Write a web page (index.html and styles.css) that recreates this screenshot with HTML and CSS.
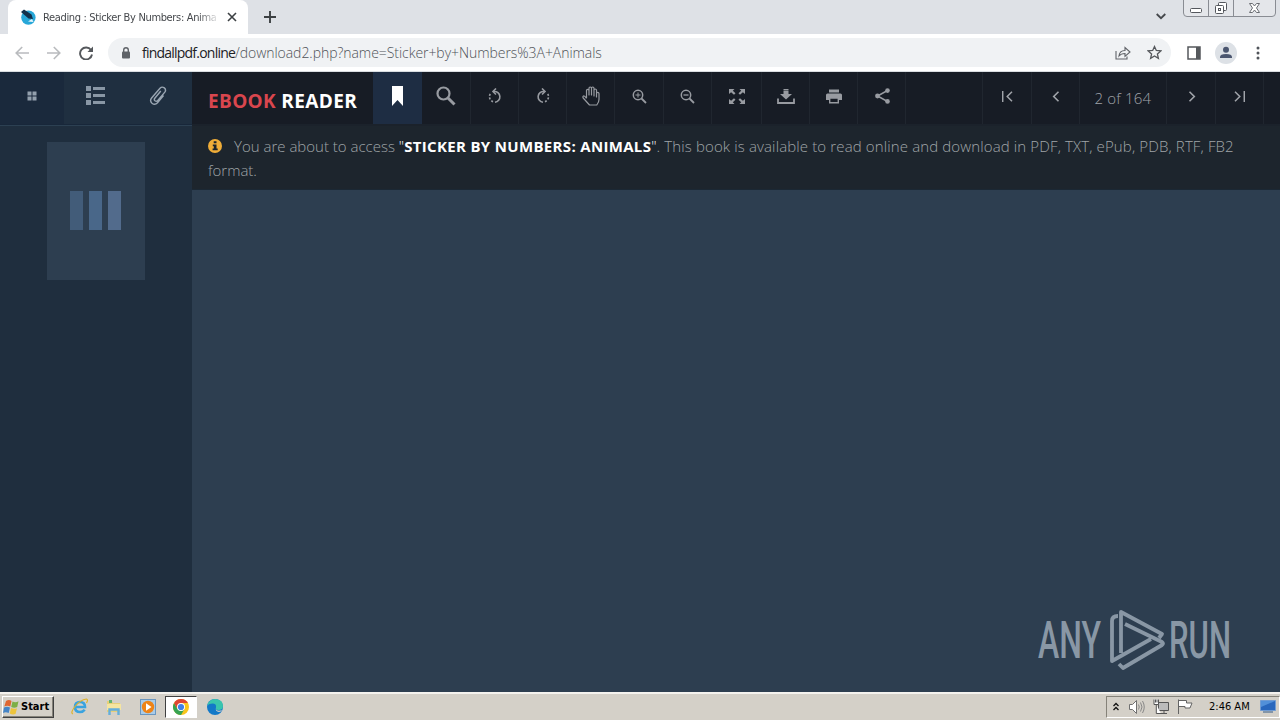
FILE: index.html
```html
<!DOCTYPE html>
<html lang="en">
<head>
<meta charset="utf-8">
<title>Reading : Sticker By Numbers: Animals</title>
<link rel="stylesheet" href="styles.css">
</head>
<body>
<header class="tabstrip">
  <div class="tab">
    <svg class="favicon" width="16" height="16" viewBox="0 0 16 16"><circle cx="8.400" cy="8.600" r="7.200" fill="#27a7d8"/><path d="m1 3 3-2.500 7.500 5L13 10l-4.500-.5z" fill="#12304b"/><path d="m8 12.500 4-2.500 1.500 3z" fill="#e9f6fb"/></svg>
    <span class="tab-title">Reading : Sticker By Numbers: Anima</span>
    <svg class="tab-close" width="10" height="10" viewBox="0 0 10 10"><path d="m1 1 8 8M9 1 1 9" stroke="#3c4043" stroke-width="1.600"/></svg>
  </div>
  <svg class="newtab" width="12" height="12" viewBox="0 0 12 12"><path d="M6 0v12M0 6h12" stroke="#3c4043" stroke-width="1.900"/></svg>
  <svg class="tabsearch" width="10" height="7" viewBox="0 0 10 7"><path d="m.7 1 4.300 4.200L9.300 1" fill="none" stroke="#45484c" stroke-width="1.800"/></svg>
  <svg class="winctl" width="94" height="18" viewBox="0 0 94 18"><path d="M.5 0v13q0 3.500 3.500 3.500h85q3.500 0 3.500-3.500V0M25.500 0v16M50.500 0v16" fill="#e4e6ea" stroke="#898c93"/><rect x="7.500" y="8.500" width="11" height="4" rx="1" fill="#fff" stroke="#54575d"/><rect x="35.500" y="2.500" width="8" height="8" rx="1" fill="#fff" stroke="#54575d"/><rect x="32.500" y="5.500" width="8" height="8" rx="1" fill="#fff" stroke="#54575d"/><rect x="35.500" y="8.500" width="2" height="2" fill="#fff" stroke="#54575d"/><path d="M66.500 3.500h3l2 2.500 2-2.500h3l-3 4.500 3 4.500h-3l-2-2.500-2 2.500h-3l3-4.500z" fill="#fff" stroke="#6a6d73"/></svg>
</header>
<nav class="addressbar">
  <svg class="nav-back" width="14" height="14" viewBox="0 0 14 14"><path d="M14 7H1.500M7.200 1 1.200 7l6 6" fill="none" stroke="#b9bbbe" stroke-width="1.600"/></svg>
  <svg class="nav-fwd" width="14" height="14" viewBox="0 0 14 14"><path d="M0 7h12.500M6.800 1l6 6-6 6" fill="none" stroke="#b9bbbe" stroke-width="1.600"/></svg>
  <svg class="nav-reload" width="14" height="14" viewBox="0 0 14 14"><path d="M12 4A6 6 0 1 0 13 8.500" fill="none" stroke="#55585c" stroke-width="1.900"/><path d="M14 .5V6H8.500z" fill="#55585c"/></svg>
  <div class="omnibox">
    <svg class="lock" width="10" height="12" viewBox="0 0 10 12"><rect x="1" y="4.500" width="8" height="7" rx="1" fill="#5f6368"/><path d="M2.700 5V3a2.300 2.200 0 0 1 4.600 0v2" fill="none" stroke="#5f6368" stroke-width="1.400"/></svg>
    <span class="url"><span class="url-host">findallpdf.online</span><span class="url-path">/download2.php?name=Sticker+by+Numbers%3A+Animals</span></span>
    <svg class="share-page" width="16" height="14" viewBox="0 0 16 14"><path d="M1 5v8h11v-2.500M4 10q.5-5.500 6-5.500V1.500L15 6l-5 4.300V7.500Q6 7.500 4 10z" fill="none" stroke="#606368" stroke-width="1.100"/></svg>
    <svg class="star" width="15" height="15" viewBox="0 0 15 15"><path d="m7.500 1.500 1.800 4 4.500.4-3.400 3 1 4.400-3.900-2.300-3.900 2.300 1-4.400-3.400-3 4.500-.4z" fill="none" stroke="#55585c" stroke-width="1.300"/></svg>
  </div>
  <svg class="panel" width="14" height="14" viewBox="0 0 14 14"><path d="M1 1h12v12H1z" fill="none" stroke="#55585c" stroke-width="1.500"/><path d="M9 1h4v12H9z" fill="#55585c"/></svg>
  <svg class="avatar" width="22" height="22" viewBox="0 0 22 22"><circle cx="11" cy="11" r="11" fill="#dde1e6"/><circle cx="11" cy="7.800" r="3" fill="#4b566f"/><path d="M5 16v-1q0-3 6-3t6 3v1z" fill="#4b566f"/></svg>
  <svg class="more" width="4" height="14" viewBox="0 0 4 14" fill="#50545a"><circle cx="2" cy="2" r="1.500"/><circle cx="2" cy="7" r="1.500"/><circle cx="2" cy="12" r="1.500"/></svg>
</nav>
<main class="reader">
  <aside class="sidebar">
    <div class="side-tabs">
      <div class="side-tab side-tab-on"><svg width="10" height="10" viewBox="0 0 10 10" fill="#93a0ad"><path d="M.5.500h4v4h-4zM5.500.500h4v4h-4zM.5 5.500h4v4h-4zM5.500 5.500h4v4h-4z"/></svg></div>
      <div class="side-tab"><svg width="20" height="19" viewBox="0 0 20 19" fill="#8997a5"><path d="M0 0h5v5H0zM0 7h5v5H0zM0 14h5v5H0zM7 1h12v3H7zM7 8h12v3H7zM7 15h12v3H7z"/></svg></div>
      <div class="side-tab side-tab-clip"><svg width="18" height="20" viewBox="0 0 18 20"><path d="m14.500 9.500-6 7.200Q6 19.500 3 17.200.4 15 2.600 12L11 2.200q2-2 4.300-.3 2.200 1.900.5 4.200l-7 8.400q-1.300 1.500-2.800.3-1.300-1.200-.2-2.600l6-7.200" fill="none" stroke="#9aa6b2" stroke-width="1.400"/></svg></div>
    </div>
    <div class="thumb"><i class="bar bar-a"></i><i class="bar bar-b"></i><i class="bar bar-c"></i></div>
  </aside>
  <section class="viewer">
    <div class="toolbar">
      <h1 class="brand"><span class="brand-red">EBOOK</span> READER</h1>
      <div class="tool tool-on"><svg width="11" height="20" viewBox="0 0 11 20"><path d="M0 0h11v20l-5.500-6L0 20z" fill="#fff"/></svg></div>
      <div class="tool tool-search"><svg width="20" height="20" viewBox="0 0 20 20" fill="none" stroke="#989ba1"><circle cx="7.500" cy="7.500" r="6" stroke-width="2.200"/><path d="m12 12 6.500 6.500" stroke-width="3"/></svg></div>
      <div class="tool"><svg width="14" height="16" viewBox="0 0 14 16" fill="none" stroke="#989ba1" stroke-width="1.600"><path d="M6 3.500A5.300 5.300 0 1 1 7 14.200"/><path d="M5 13.700A5.400 5.400 0 0 1 2.500 5.500" stroke-dasharray="2 1.600"/><path d="M8 .5 5 3.500l3 3"/></svg></div>
      <div class="tool"><svg width="14" height="16" viewBox="0 0 14 16" fill="none" stroke="#989ba1" stroke-width="1.600"><path d="M8 3.500A5.300 5.300 0 1 0 7 14.200"/><path d="M9 13.700a5.400 5.400 0 0 0 2.500-8.200" stroke-dasharray="2 1.600"/><path d="m6 .5 3 3-3 3"/></svg></div>
      <div class="tool"><svg width="18" height="20" viewBox="0 0 18 20"><path d="M4.500 12V4.500q0-1.200 1.200-1.200T7 4.500V9 2.200Q7 1 8.200 1t1.300 1.200V9 2.200Q9.500 1 10.700 1T12 2.200V10 4q0-1 1.200-1t1.300 1v7-3.500q0-1.200 1.200-1.200T17 7.500v6q0 2.500-2.200 5.500H7.500L1.200 12q-.7-1.500.3-2t3 2.500" fill="none" stroke="#989ba1" stroke-width="1.200" stroke-linejoin="round"/></svg></div>
      <div class="tool"><svg width="15" height="15" viewBox="0 0 15 15" fill="none" stroke="#989ba1"><circle cx="6" cy="6" r="4.700" stroke-width="1.500"/><path d="m9.500 9.500 4.500 4.500" stroke-width="1.800"/><path d="M3.500 6h5M6 3.500v5"/></svg></div>
      <div class="tool"><svg width="15" height="15" viewBox="0 0 15 15" fill="none" stroke="#989ba1"><circle cx="6" cy="6" r="4.700" stroke-width="1.500"/><path d="m9.500 9.500 4.500 4.500" stroke-width="1.800"/><path d="M3.500 6h5" stroke-width="1.300"/></svg></div>
      <div class="tool tool-wide"><svg width="16" height="15" viewBox="0 0 16 15"><path d="M0 0h5.500L3.800 1.700l2.700 2.600-1.500 1.500-2.900-2.600L0 5zM16 0h-5.500l1.700 1.700-2.700 2.600L11 5.800l2.900-2.600L16 5zM0 15h5.500l-1.700-1.700 2.700-2.600L5 9.200l-2.900 2.600L0 10zM16 15h-5.500l1.700-1.700-2.700-2.600L11 9.200l2.900 2.600L16 10z" fill="#989ba1"/></svg></div>
      <div class="tool"><svg width="18" height="15" viewBox="0 0 18 15"><path d="M6.500 1.500h5V5H15l-6 5.500L3 5h3.500zM6.500 0h5v1h-5z" fill="#989ba1"/><path d="M1 9.500V14h16V9.500" fill="none" stroke="#989ba1" stroke-width="1.800"/></svg></div>
      <div class="tool"><svg width="16" height="15" viewBox="0 0 16 15"><path d="M3 .5h10v3H3zM1.500 4.500h13q1.500 0 1.500 1.500v5h-3V9H3v2H0V6q0-1.500 1.500-1.500z" fill="#989ba1"/><path d="M3.700 9h8.600v4.800H3.700z" fill="none" stroke="#989ba1" stroke-width="1.400"/></svg></div>
      <div class="tool"><svg width="15" height="16" viewBox="0 0 15 16" fill="#989ba1"><path d="M12.500 2.500 2.500 8l10 5.500" fill="none" stroke="#989ba1" stroke-width="1.500"/><circle cx="12.500" cy="2.600" r="2.300"/><circle cx="2.500" cy="8" r="2.400"/><circle cx="12.500" cy="13.400" r="2.300"/></svg></div>
      <div class="spacer"></div>
      <div class="tool tool-nav"><svg width="11" height="11" viewBox="0 0 11 11"><path d="M.7 0v11M10 .7 5.200 5.500l4.800 4.800" fill="none" stroke="#a1a4aa" stroke-width="1.500"/></svg></div>
      <div class="tool"><svg width="8" height="11" viewBox="0 0 8 11"><path d="M6.500.7 1.700 5.500l4.800 4.800" fill="none" stroke="#a1a4aa" stroke-width="1.600"/></svg></div>
      <div class="page-count">2 of 164</div>
      <div class="tool tool-nav"><svg width="8" height="11" viewBox="0 0 8 11"><path d="m1.500.7 4.800 4.800-4.800 4.800" fill="none" stroke="#a1a4aa" stroke-width="1.600"/></svg></div>
      <div class="tool"><svg width="11" height="11" viewBox="0 0 11 11"><path d="m1 .7 4.800 4.800L1 10.300M10.300 0v11" fill="none" stroke="#a1a4aa" stroke-width="1.500"/></svg></div>
      <div class="tail"></div>
    </div>
    <div class="notice">
      <p class="notice-line"><svg class="info" width="14" height="14" viewBox="0 0 14 14"><circle cx="7" cy="7" r="7" fill="#f0ad38"/><path d="M5.700 2.300h2.800v2H5.700zM4.800 5.500h3.700v4h1.200v1.800H4.600V9.500h1.200V7.200h-1z" fill="#1d242c"/></svg><span>You are about to access </span><span class="quote">"</span><b class="book">STICKER BY NUMBERS: ANIMALS</b><span class="quote">"</span><span class="after">. This book is available to read online and download in PDF, TXT, ePub, PDB, RTF, FB2</span></p>
      <p class="notice-line">format.</p>
    </div>
    <div class="canvas">
      <div class="watermark">
        <svg class="wm-logo" width="194" height="62" viewBox="0 0 194 62" fill="none" stroke="#8997a5">
          <text class="wm-text" x="-1" y="49" textLength="63" lengthAdjust="spacingAndGlyphs">ANY</text>
          <path d="M79 7q-6 0-6 5v40l39-22M82 44V3l41 22-3 4M86 15l37 18q2 1.500 0 3L84 59l-4-4" stroke-width="3.800" stroke-linejoin="round"/>
          <text class="wm-text" x="130" y="49" textLength="62" lengthAdjust="spacingAndGlyphs">RUN</text>
        </svg>
      </div>
    </div>
  </section>
</main>
<footer class="taskbar">
  <div class="start"><svg width="17" height="16" viewBox="0 0 17 16"><path d="M3 2q3-2 5.500 0L7.300 7.500q-3-1.500-6 0z" fill="#df6631"/><path d="M9.500 2.500q3 1.500 6-.2L14.200 8q-3 1.300-6 0z" fill="#7daf48"/><path d="M1 8.500q3-1.500 6 0L5.700 14q-3-1.700-5.700 0z" fill="#4584c6"/><path d="M8 9q3 1.300 6 .2L12.500 15q-3 1-5.700-.5z" fill="#edc43c"/></svg><span class="start-text">Start</span></div>
  <div class="task"><svg width="18" height="17" viewBox="0 0 18 17"><path d="M4 9h10q0-5-5-5T4 9q0 5 5 5 3 0 4.700-2.300" fill="none" stroke="#3aa3df" stroke-width="2.600"/><path d="M2 16Q-1 15 4 8.500T15.500 1q2 .5 0 4" fill="none" stroke="#deb22b" stroke-width="1.200"/></svg></div>
  <div class="task"><svg width="16" height="16" viewBox="0 0 16 16"><path d="M1 2h5l1 2h7v9H1z" fill="#e7cf79"/><path d="M3 1h3v3H3z" fill="#63b36e"/><path d="M1 5h14v6H1z" fill="#f5e5a0"/><path d="M3.500 16v-5.500h9V16" fill="none" stroke="#64aedb" stroke-width="2.400"/></svg></div>
  <div class="task"><svg width="16" height="16" viewBox="0 0 16 16"><rect x=".5" y=".5" width="15" height="15" fill="#a9cce9" stroke="#6a96bf"/><circle cx="8" cy="8" r="6.200" fill="#ee8418"/><path d="m6 4.300 5.500 3.700L6 11.700z" fill="#fff"/></svg></div>
  <div class="task task-on"><svg width="16" height="16" viewBox="0 0 16 16"><circle cx="8" cy="8" r="8" fill="#f9c51c"/><path d="M1.070 4A8 8 0 0 1 14.930 4H8z" fill="#df4634"/><path d="M1.070 4A8 8 0 0 0 8 16l3.500-6L8 8 4.500 10z" fill="#36a352"/><path d="M1.070 4 4.500 10 8 4z" fill="#df4634"/><circle cx="8" cy="8" r="4" fill="#fff"/><circle cx="8" cy="8" r="3.100" fill="#4080e8"/></svg></div>
  <div class="task"><svg width="16" height="16" viewBox="0 0 16 16"><circle cx="8" cy="8" r="8" fill="#1379c8"/><path d="M.3 6.500Q2 0 8.200 0 16 .5 16 7q0 4-4.500 4-3.500 0-2.500-2.500.7-4-3.500-4Q2 4.500.3 6.500z" fill="#39c5ad"/><path d="M9 8.500q-1 3 3 3.200 2 0 3.200-1-1.200 2.300-3.200 2.300-4-.5-3-4.500z" fill="#d4d0c8"/></svg></div>
  <div class="tray">
    <svg class="tray-up" width="6" height="9" viewBox="0 0 6 9"><path d="m.5 4 2.500-2.500L5.500 4M.5 8 3 5.500 5.500 8" fill="none" stroke="#111" stroke-width="1.300"/></svg>
    <svg class="tray-sound" width="16" height="14" viewBox="0 0 16 14"><path d="M.5 4.500h3l4-4v13l-4-4h-3z" fill="#fff" stroke="#707070"/><path d="M9.500 4.500q1.500 2.500 0 5M11.500 2.500q3 4.500 0 9M13.500 1q3.500 6 0 12" fill="none" stroke="#888"/></svg>
    <svg class="tray-net" width="16" height="16" viewBox="0 0 16 16"><path d="M5.500 3.500h10v8h-10zM8 14.500h6M11 11.500v3" fill="#bbb" stroke="#555"/><path d="M1 .5v5h4.500v-5M2.500.500v3M4 .5v3M3.300 5.500v9H8" fill="#fff" stroke="#555"/></svg>
    <svg class="tray-flag" width="16" height="15" viewBox="0 0 16 15"><path d="M1.500 15V.500M1.500 1.500h8v2.500h5.500l-2 5H8v-1.500H1.500" fill="#fff" stroke="#646464"/></svg>
    <span class="clock">2:46 AM</span>
    <svg class="tray-desk" width="16" height="13" viewBox="0 0 16 13"><path d="M.5.500h15v10H.5z" fill="#2967bd" stroke="#719cd3"/><path d="M1 1h14L1 7z" fill="#5290d9"/><path d="M3 12h10" stroke="#69829e" stroke-width="1.500"/></svg>
  </div>
</footer>
</body>
</html>
```
FILE: styles.css
```css
* { box-sizing: border-box; }
body { margin: 0; width: 1280px; height: 720px; overflow: hidden; display: flex; flex-direction: column; font-family: "Open Sans", sans-serif; background: #2d3e50; }
svg { display: block; flex: none; }

.tabstrip { height: 34px; flex: none; display: flex; align-items: flex-start; background: #dee1e6; padding-left: 8px; }
.tab { width: 240px; height: 34px; background: #fff; border-radius: 8px 8px 0 0; display: flex; align-items: center; padding-left: 12px; }
.tab-title { width: 177px; margin-left: 7px; white-space: nowrap; font: 11px "DejaVu Sans Condensed", "DejaVu Sans", sans-serif; color: #45484c; letter-spacing: -0.34px; -webkit-mask-image: linear-gradient(90deg, #000 155px, transparent 177px); mask-image: linear-gradient(90deg, #000 155px, transparent 177px); }
.tab-close { margin-left: 7px; }
.newtab { margin: 11px 0 0 16px; }
.tabsearch { margin: 13px 17px 0 auto; }
.winctl { margin-right: 3px; }

.addressbar { height: 38px; flex: none; display: flex; align-items: center; background: #fff; border-bottom: 1px solid #d9dde1; padding: 0 20px 0 15px; }
.nav-fwd { margin-left: 18px; }
.nav-reload { margin-left: 18px; }
.omnibox { width: 1063px; height: 29px; margin-left: 15px; border-radius: 15px; background: #f0f2f4; display: flex; align-items: center; padding: 0 9px 0 13px; }
.url { margin-left: 11px; font-size: 14px; font-weight: 300; line-height: 20px; white-space: nowrap; }
.url-host { color: #202124; font-weight: 400; letter-spacing: -0.78px; }
.url-path { color: #4f5358; letter-spacing: -0.05px; }
.share-page { margin-left: auto; }
.star { margin-left: 16px; }
.panel { margin-left: 16px; }
.avatar { margin-left: 14px; }
.more { margin-left: auto; }

.reader { flex: 1; display: flex; min-height: 0; }
.sidebar { width: 192px; flex: none; background: #1f2e3e; }
.side-tabs { display: flex; height: 54px; border-bottom: 1px solid #2c4052; background: #1f2f40; }
.side-tab { width: 64px; height: 53px; display: flex; align-items: center; justify-content: center; padding: 0 1px 5px 0; border-bottom: 1px solid #18273a; }
.side-tab-clip { padding-right: 4px; }
.side-tab-on { background: #1a293c; }
.thumb { width: 98px; height: 138px; margin: 16px auto 0 47px; padding: 0 1px 1px 0; background: #2d3e50; display: flex; align-items: center; justify-content: center; gap: 6px; }
.bar { width: 13px; height: 39px; }
.bar-a { background: #425c79; }
.bar-b { background: #496789; }
.bar-c { background: #526b8c; }

.viewer { flex: 1; display: flex; flex-direction: column; min-width: 0; }
.toolbar { height: 54px; flex: none; display: flex; background: #171c25; border-bottom: 2px solid #1b222b; }
.brand { width: 181px; margin: 0; padding: 15px 0 0 16px; font-size: 19px; line-height: 28px; font-weight: 700; white-space: nowrap; color: #fff; letter-spacing: 0.36px; }
.brand-red { color: #d9464e; }
.tool { width: 48.150px; display: flex; align-items: center; justify-content: center; padding: 0 0 4px 1px; border-right: 1px solid #20262f; }
.tool-on { width: 49px; background: #1e2d43; border-right: 0; padding-left: 0; }
.tool-search { width: 49px; padding-left: 0; }
.tool-wide { width: 50px; }
.tool-nav { width: 49px; padding-left: 2px; }
.spacer { flex: 1; border-right: 1px solid #20262f; }
.page-count { width: 87px; border-right: 1px solid #20262f; padding-top: 15px; text-align: center; color: #a0a3a9; font-size: 15px; font-weight: 300; line-height: 22px; letter-spacing: 0.2px; }
.tail { width: 16px; }
.notice { height: 64px; flex: none; padding: 8px 16px; background: #1d252d; border-bottom: 1px solid #1b2834; color: #a0a5a9; font-size: 15px; font-weight: 300; }
.notice-line { margin: 0; height: 24px; line-height: 24px; white-space: pre; display: flex; align-items: center; }
.info { margin-right: 12px; }
.quote { color: #fff; }
.book { color: #fff; font-weight: 700; letter-spacing: 0.33px; font-size: 15px; }
.after { letter-spacing: 0.13px; }
.canvas { flex: 1; display: flex; align-items: flex-end; justify-content: flex-end; padding: 0 47px 21px 0; background: #2d3e50; }
.wm-logo { overflow: visible; }
.wm-text { font: 500 51px "Roboto", sans-serif; fill: #8997a5; stroke: none; }

.taskbar { height: 28px; flex: none; display: flex; align-items: center; background: #d4d0c8; border-top: 2px solid #f4f2ee; padding: 1px 0 2px 2px; }
.start { width: 52px; height: 22px; margin-right: 10px; display: flex; align-items: center; gap: 1px; border: 1px solid; border-color: #fff #404040 #404040 #fff; box-shadow: inset -1px -1px #858279; }
.start-text { font: bold 11px "DejaVu Sans Condensed", "DejaVu Sans", sans-serif; color: #000; }
.task { width: 32px; height: 22px; margin-right: 1.800px; display: flex; align-items: center; justify-content: center; }
.task-on { background: #fff; border: 1px solid; border-color: #404040 #fff #fff #404040; }
.tray { width: 174px; height: 22px; margin-left: auto; display: flex; align-items: center; border: 1px solid; border-color: #858279 #fff #fff #858279; padding-left: 6px; }
.tray-sound { margin-left: 10px; }
.tray-net { margin-left: 8px; }
.tray-flag { margin-left: 8px; }
.clock { width: 42px; margin-left: 16px; font: 11px "DejaVu Sans Condensed", "DejaVu Sans", sans-serif; color: #000; white-space: nowrap; }
.tray-desk { margin-left: 9px; }
```
